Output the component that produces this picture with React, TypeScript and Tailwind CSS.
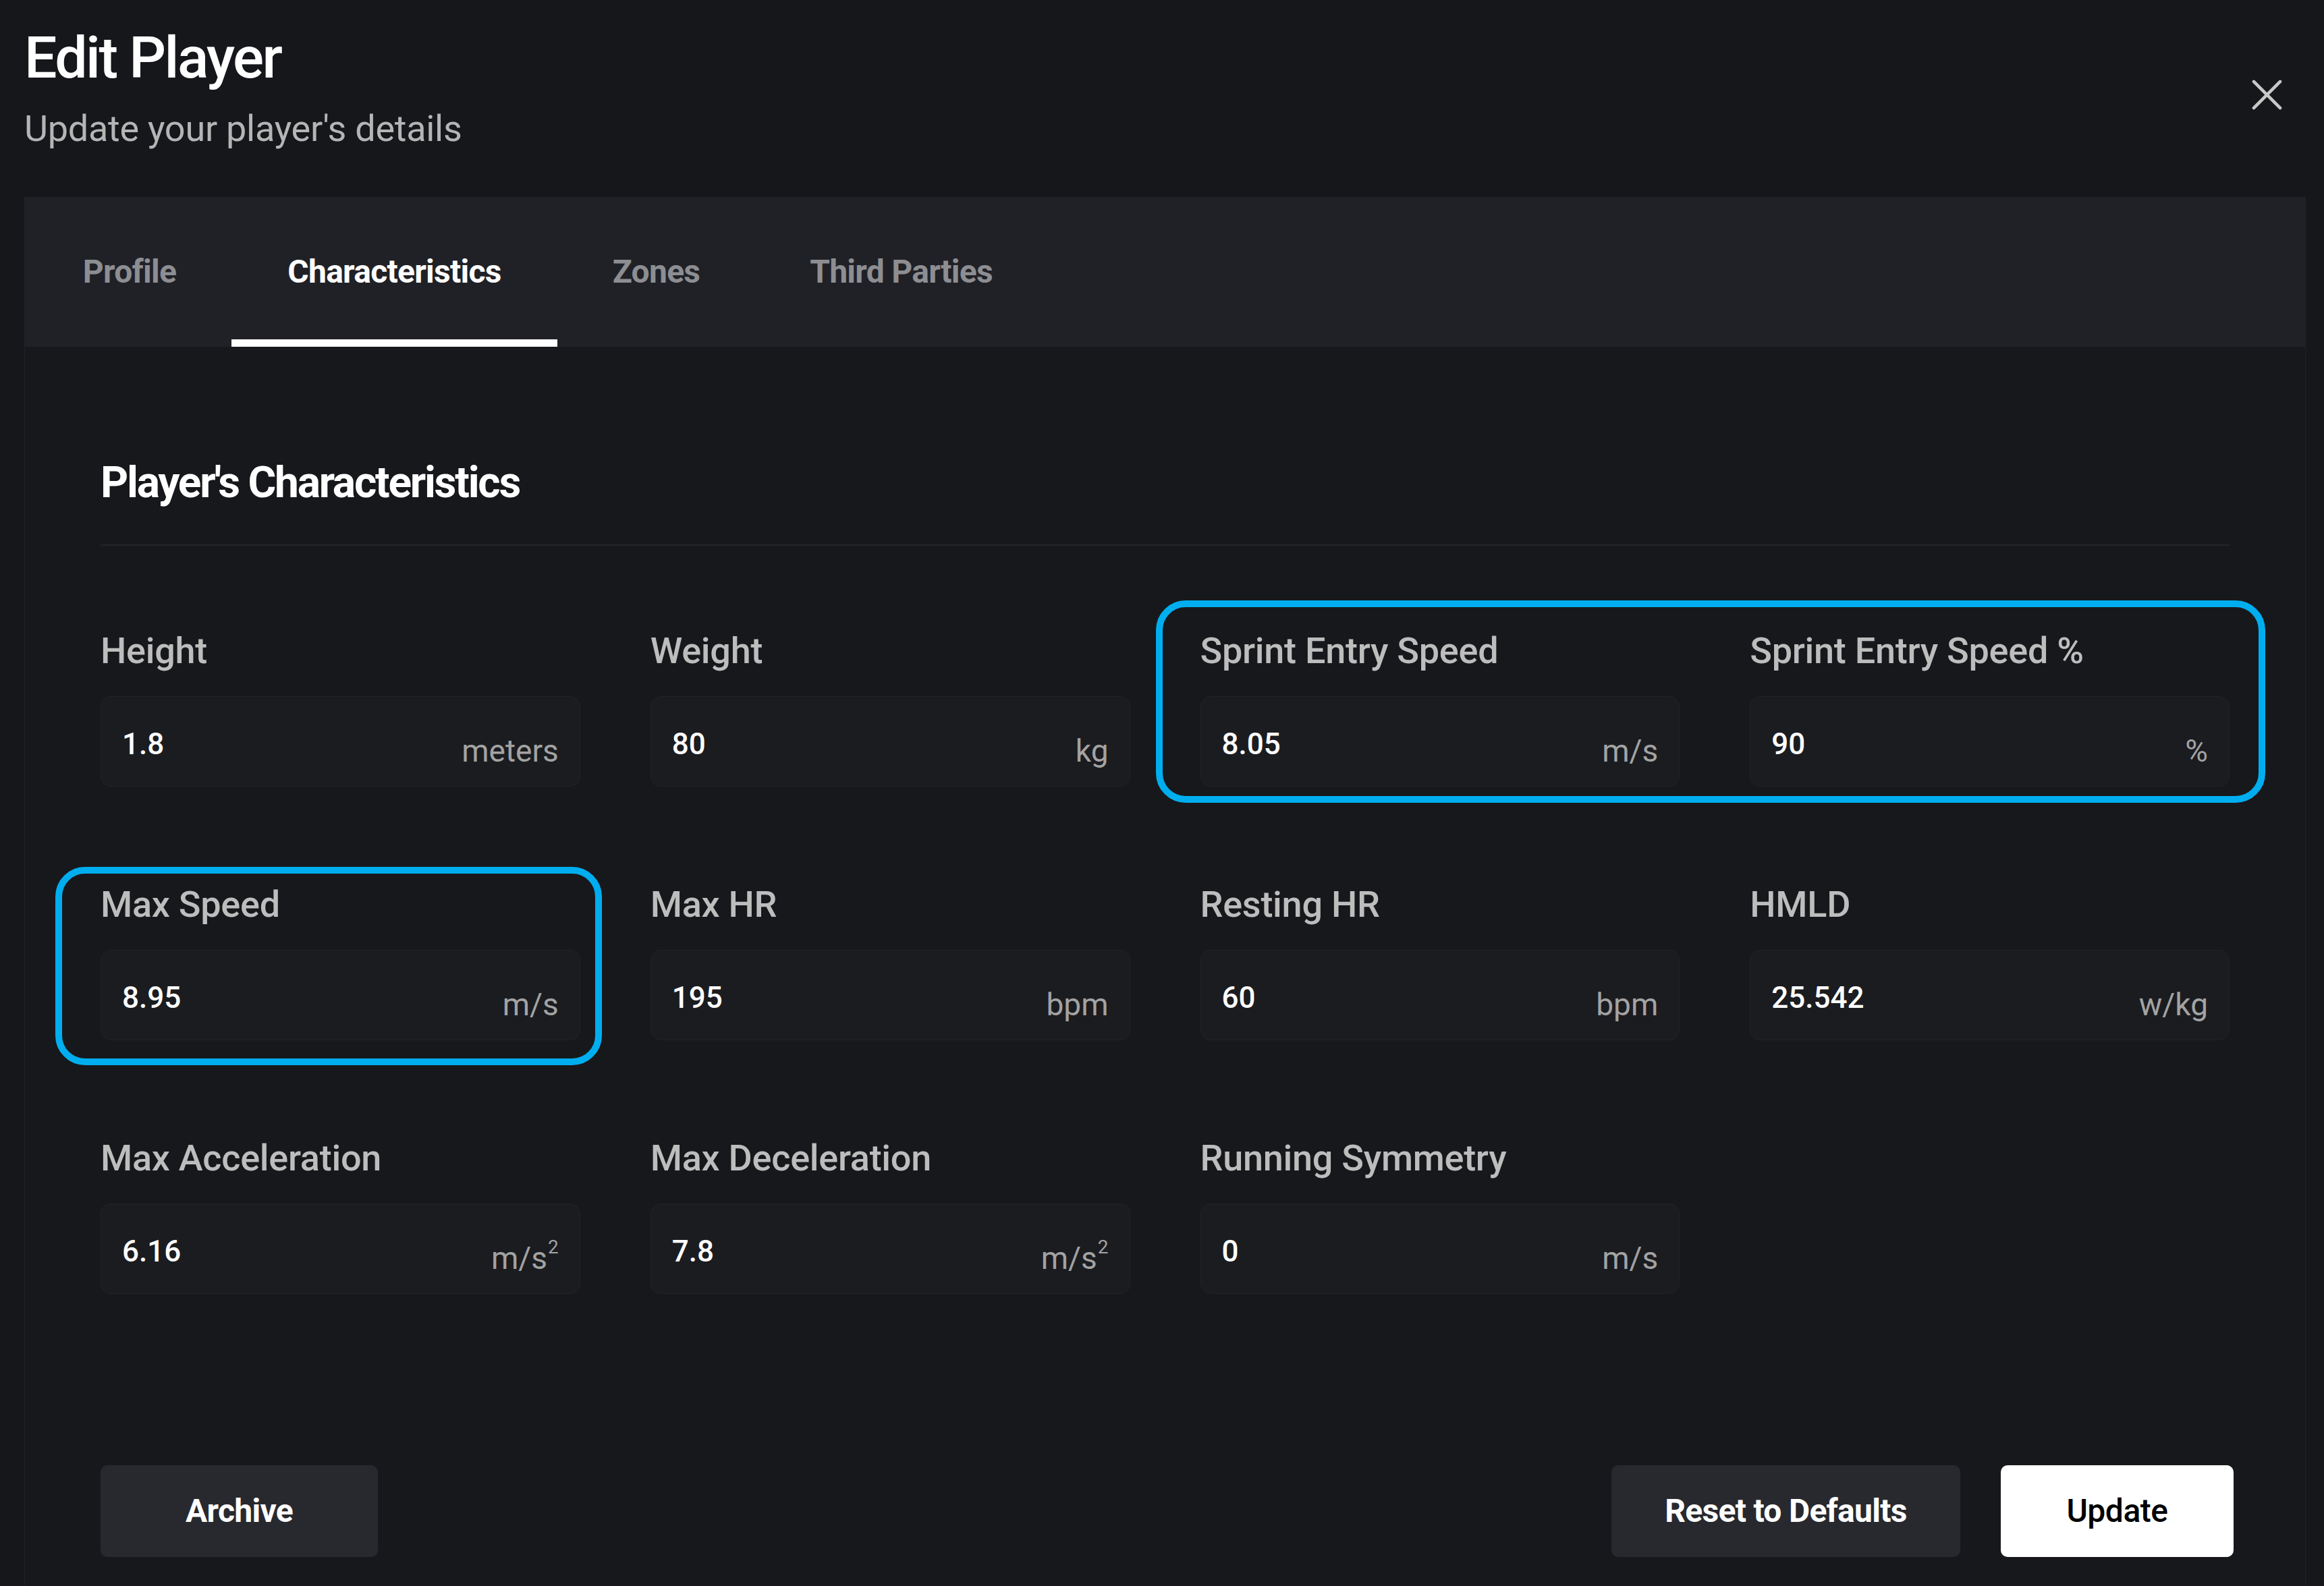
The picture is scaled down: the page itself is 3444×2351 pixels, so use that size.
import React from 'react';

interface Field {
  label: string;
  value: string;
  unit: string;
  squared?: boolean;
}

const rows: Field[][] = [
  [
    { label: 'Height', value: '1.8', unit: 'meters' },
    { label: 'Weight', value: '80', unit: 'kg' },
    { label: 'Sprint Entry Speed', value: '8.05', unit: 'm/s' },
    { label: 'Sprint Entry Speed %', value: '90', unit: '%' },
  ],
  [
    { label: 'Max Speed', value: '8.95', unit: 'm/s' },
    { label: 'Max HR', value: '195', unit: 'bpm' },
    { label: 'Resting HR', value: '60', unit: 'bpm' },
    { label: 'HMLD', value: '25.542', unit: 'w/kg' },
  ],
  [
    { label: 'Max Acceleration', value: '6.16', unit: 'm/s', squared: true },
    { label: 'Max Deceleration', value: '7.8', unit: 'm/s', squared: true },
    { label: 'Running Symmetry', value: '0', unit: 'm/s' },
  ],
];

const tabs = [
  { name: 'Profile', width: 'w-[302px]' },
  { name: 'Characteristics', width: 'w-[483px]', active: true },
  { name: 'Zones', width: 'w-[293px]' },
  { name: 'Third Parties', width: 'w-[433px]' },
];

function FieldInput({ field }: { field: Field }) {
  return (
    <div className="flex flex-col">
      <div className="h-[64px] text-[54px] leading-[64px] font-medium tracking-[-0.005em] text-[#bdbdbd] whitespace-nowrap">
        {field.label}
      </div>
      <div className="mt-[35px] h-[134px] rounded-[15px] border border-[#222328] bg-[#1b1c20] px-[31px] flex items-center justify-between">
        <span className="pt-[8px] text-[44px] font-medium text-white">{field.value}</span>
        <span className="pt-[28px] text-[46px] text-[#a3a3a3]">
          {field.unit}
          {field.squared && <sup className="text-[28px] ml-[1px] -top-[0.8em]">2</sup>}
        </span>
      </div>
    </div>
  );
}

export default function App() {
  return (
    <div className="h-[2351px] w-full overflow-hidden bg-[#16171b] font-['Roboto',sans-serif]">
      {/* Header */}
      <div className="flex items-start justify-between pl-[36px] pr-[61px] pt-[33px]">
        <div>
          <h1 className="text-[86px] leading-[106px] font-medium tracking-[-0.03em] text-white">Edit Player</h1>
          <p className="mt-[20px] text-[54px] leading-[64px] tracking-[-0.005em] text-[#b5b5b5]">Update your player's details</p>
        </div>
        <button className="mt-[84px] h-[47px] w-[47px] text-[#c8c8c8]">
          <svg viewBox="0 0 24 24" className="h-full w-full" fill="none" stroke="currentColor" strokeWidth={2.4} strokeLinecap="round">
            <path d="M2 2L22 22M22 2L2 22" />
          </svg>
        </button>
      </div>

      {/* Card */}
      <div className="ml-[36px] mr-[27px] mt-[69px] h-[2100px] border-x border-[#212227] bg-[#17181c]">
        <div className="flex h-[222px] items-stretch bg-[#202126] pl-[4px]">
          {tabs.map((tab) => (
            <div
              key={tab.name}
              className={`relative flex items-center justify-center ${tab.width} text-[48px] font-bold tracking-[-0.015em] ${
                tab.active ? 'text-white' : 'text-[#8d8e92]'
              }`}
            >
              {tab.name}
              {tab.active && <span className="absolute bottom-0 left-0 right-0 h-[11px] bg-white" />}
            </div>
          ))}
        </div>

        <div className="px-[112px] pt-[164px]">
          <h2 className="text-[64px] leading-[76px] font-bold tracking-[-0.035em] text-white">Player's Characteristics</h2>
          <div className="mt-[53px] h-[2px] bg-[#232429]" />

          <div className="relative mt-[124px] grid grid-cols-4 gap-x-[104px] gap-y-[143px]">
            {rows.flat().map((f) => (
              <FieldInput key={f.label} field={f} />
            ))}

            {/* highlight overlays */}
            <div className="pointer-events-none absolute left-[1564px] top-[-43px] h-[300px] w-[1644px] rounded-[44px] border-[10px] border-[#00aeef]" />
            <div className="pointer-events-none absolute left-[-67px] top-[352px] h-[294px] w-[810px] rounded-[44px] border-[10px] border-[#00aeef]" />
          </div>

          <div className="mt-[254px] mr-[-6px] flex items-center justify-between">
            <button className="h-[136px] w-[411px] rounded-[10px] bg-[#28292e] text-[48px] font-bold tracking-[-0.015em] text-white">
              Archive
            </button>
            <div className="flex gap-[60px]">
              <button className="h-[136px] w-[517px] rounded-[10px] bg-[#28292e] text-[48px] font-bold tracking-[-0.015em] text-white">
                Reset to Defaults
              </button>
              <button className="h-[136px] w-[345px] rounded-[10px] bg-white text-[48px] font-medium tracking-[-0.01em] text-black">
                Update
              </button>
            </div>
          </div>
        </div>
      </div>
    </div>
  );
}
